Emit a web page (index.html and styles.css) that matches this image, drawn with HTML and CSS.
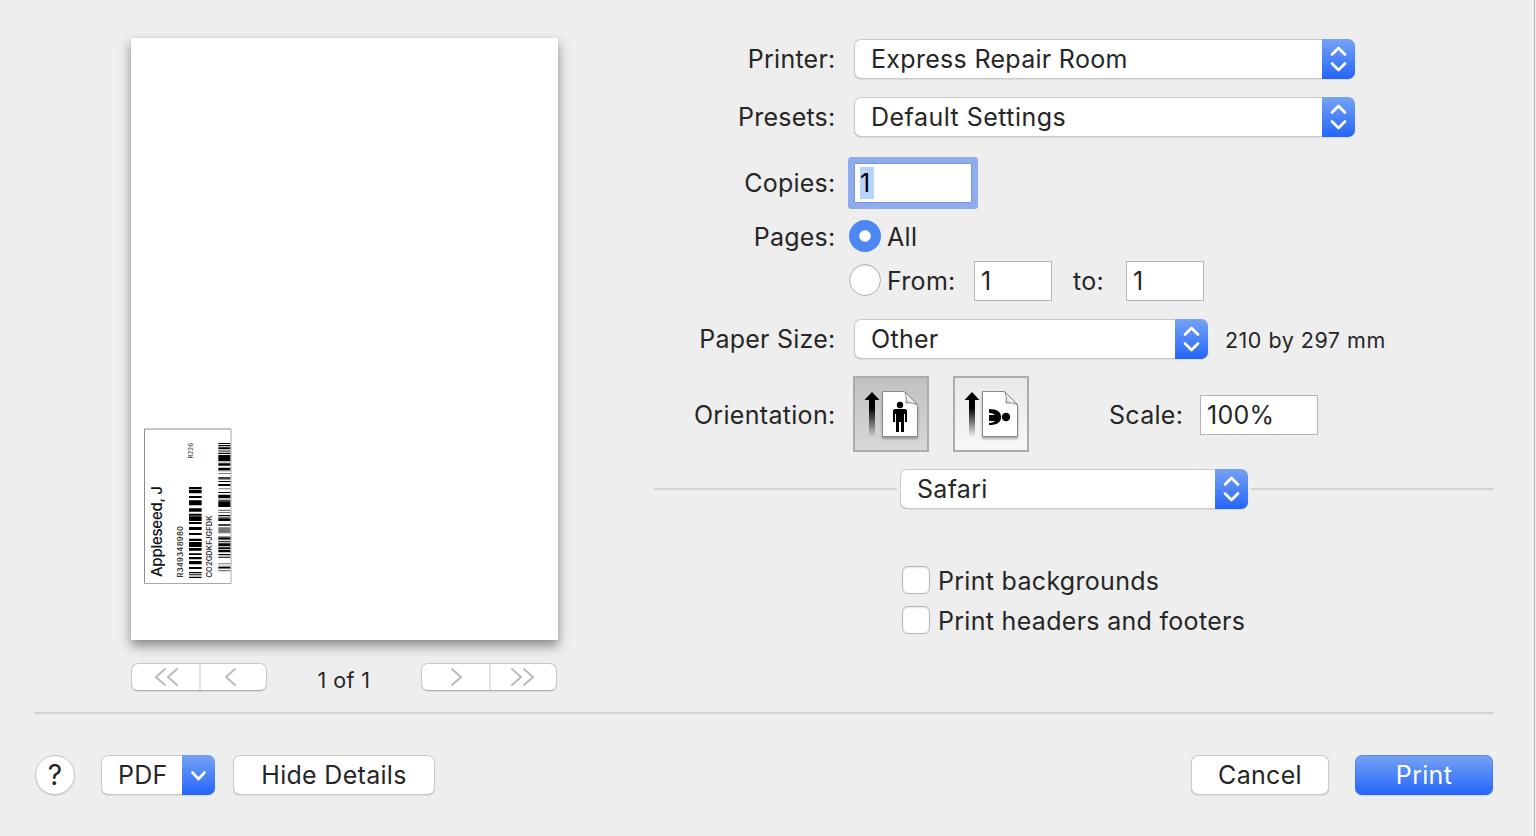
FILE: index.html
```html
<!DOCTYPE html>
<html lang="en">
<head>
<meta charset="utf-8">
<title>Print</title>
<link rel="stylesheet" href="styles.css">
</head>
<body>
<div class="dialog">
  <main class="content">
    <section class="preview">
      <div class="page">
        <svg class="label-art" width="90" height="158" viewBox="143 427 90 158">
          <path d="M144.500 583.500v-154.500h86.500" fill="none" stroke="#8c8c8c"/>
          <path d="M144.500 583.500H231V429" fill="none" stroke="#a8a8a8"/>
          <g fill="#111">
            <text transform="translate(162 577) rotate(-90)" font-size="15" font-weight="500" textLength="91">Appleseed, J</text>
            <text transform="translate(183 577.500) rotate(-90)" font-size="7.500" font-weight="600" textLength="51.500" fill="#333">R349348980</text>
            <text transform="translate(212.200 577.500) rotate(-90)" font-size="7.500" font-weight="600" textLength="62" fill="#333">CO2GDKFJGFDK</text>
            <text transform="translate(192.500 458.500) rotate(-90)" font-size="6" font-weight="500" textLength="15.500" fill="#444">R226</text>
          </g>
          <g fill="none" stroke="#000" transform="translate(130 420) scale(.33333)">
            <path stroke-width="38" d="M196 201v6m0 2v11m0 8v6m0 7v15m0 9v10m0 6v6m0 2v14m0 3v6m0 9v9m0 9v6m0 11v7m0 3v15m0 3v8m0 8v5m0 6v7m0 5v10m0 8v6m0 9v4m0 3v3m0 4v4"/>
            <path stroke-width="36" d="M283 69v3m0 3v4m0 3v6m0 10v4m0 3v18m0 2v2m0 3v7m0 6v8m0 21v4m0 7v3m0 6v6m0 18v3m0 5v11m0 4v3m0 2v17m0 24v4m0 6v8m0 10v4m0 35v7m0 5v3m0 3v9m0 3v5m0 2v8m0 5v4m0 4v3m0 28v4"/>
            <path stroke="#777" stroke-width="36" d="M283 91v5m0 55v3m0 5v3m0 15v2m0 26v3m0 61v4m0 3v3m0 12v3m0 28v18m0 9v3m0 6v3m0 69v3m0 4v3m0 4v3m0 3v4"/>
          </g>
        </svg>
      </div>
      <div class="pager">
        <div class="segmented">
          <span class="segment"><svg width="26" height="20" viewBox="0 0 26 20"><path d="M12 2 3 10l9 8M24 2l-9 8 9 8"/></svg></span>
          <span class="segment back"><svg width="14" height="20" viewBox="0 0 14 20"><path d="M11 2 2 10l9 8"/></svg></span>
        </div>
        <span class="page-count">1 of 1</span>
        <div class="segmented">
          <span class="segment"><svg width="14" height="20" viewBox="0 0 14 20"><path d="m3 2 9 8-9 8"/></svg></span>
          <span class="segment last"><svg width="26" height="20" viewBox="0 0 26 20"><path d="m2 2 9 8-9 8M14 2l9 8-9 8"/></svg></span>
        </div>
      </div>
    </section>
    <section class="settings">
      <div class="row printer"><span class="label">Printer:</span>
        <div class="popup wide"><span class="value">Express Repair Room</span><span class="stepper"><svg width="33" height="40" viewBox="0 0 33 40"><path d="m10 15.500 6.500-6.500 6.500 6.500M10 24.500l6.500 6.500 6.500-6.500"/></svg></span></div></div>
      <div class="row presets"><span class="label">Presets:</span>
        <div class="popup wide"><span class="value preset-name">Default Settings</span><span class="stepper"><svg width="33" height="40" viewBox="0 0 33 40"><path d="m10 15.500 6.500-6.500 6.500 6.500M10 24.500l6.500 6.500 6.500-6.500"/></svg></span></div></div>
      <div class="row copies"><span class="label">Copies:</span>
        <div class="field focused"><span class="selection">1</span></div></div>
      <div class="row pages-all"><span class="label">Pages:</span>
        <span class="radio checked"></span><span class="radio-text">All</span></div>
      <div class="row pages-from"><span class="label"></span>
        <span class="radio lifted"></span><span class="radio-text from">From:</span>
        <div class="field number">1</div><span class="to">to:</span><div class="field number">1</div></div>
      <div class="row paper"><span class="label">Paper Size:</span>
        <div class="popup medium"><span class="value">Other</span><span class="stepper"><svg width="33" height="40" viewBox="0 0 33 40"><path d="m10 15.500 6.500-6.500 6.500 6.500M10 24.500l6.500 6.500 6.500-6.500"/></svg></span></div>
        <span class="dimensions">210 by 297 mm</span></div>
      <div class="row orientation"><span class="label">Orientation:</span>
        <div class="orient selected">
          <svg width="72" height="72" viewBox="2 2 72 72">
            <defs>
              <linearGradient id="fade" x1="0" y1="0" x2="0" y2="1"><stop offset=".35" stop-color="#000"/><stop offset="1" stop-color="#000" stop-opacity="0"/></linearGradient>
              <linearGradient id="curl" x1="0" y1="1" x2="1" y2="0"><stop offset="0" stop-color="#aaa"/><stop offset=".45" stop-color="#fff"/></linearGradient>
            </defs>
            <path class="sheet" d="M29.500 15.500h22l13 13v32h-35z"/>
            <path d="M52 16q2 5 1 11 6-1 11 1.500z" fill="url(#curl)" stroke="#888"/>
            <path d="M11.500 24 19 16l7.500 8H22v37h-6V24z" fill="url(#fade)"/>
            <circle cx="47" cy="29" r="3.200"/>
            <path d="M42 33h10q2 0 2 2v11h-2v-8h-1v18h-3V46h-2v10h-3V38h-1v8h-2V35q0-2 2-2z"/>
          </svg></div>
        <div class="orient">
          <svg width="72" height="72" viewBox="2 2 72 72">
            <path class="sheet" d="M29.500 15.500h22l13 13v32h-35z"/>
            <path d="M52 16q2 5 1 11 6-1 11 1.500z" fill="url(#curl)" stroke="#888"/>
            <path d="M11.500 24 19 16l7.500 8H22v37h-6V24z" fill="url(#fade)"/>
            <circle cx="53" cy="41" r="4.200"/>
            <path d="M36 33q12 0 12 8t-12 8v-2q4 0 6-1.700l-1-.3h-5v-6h5l1-.3q-2-1.700-6-1.700z"/>
          </svg></div>
        <span class="scale-label">Scale:</span><div class="field scale">100%</div></div>
      <div class="divider-row"><i class="line before"></i>
        <div class="popup app"><span class="value">Safari</span><span class="stepper"><svg width="33" height="40" viewBox="0 0 33 40"><path d="m10 15.500 6.500-6.500 6.500 6.500M10 24.500l6.500 6.500 6.500-6.500"/></svg></span></div><i class="line after"></i></div>
      <div class="options">
        <div class="option"><span class="checkbox"></span><span class="option-text">Print backgrounds</span></div>
        <div class="option"><span class="checkbox"></span><span class="option-text">Print headers and footers</span></div>
      </div>
    </section>
  </main>
  <footer class="actions">
    <span class="help">?</span>
    <div class="popup pdf"><span class="value">PDF</span><span class="stepper"><svg width="33" height="40" viewBox="0 0 33 40"><path d="m10.500 17.500 6 6.500 6-6.500"/></svg></span></div>
    <span class="button details">Hide Details</span>
    <span class="button cancel">Cancel</span>
    <span class="button primary">Print</span>
  </footer>
</div>
</body>
</html>
```
FILE: styles.css
```css
* { box-sizing: border-box; }
body { margin: 0; background: #eee; color: #262626; font: 25px/40px Inter, "Liberation Sans", sans-serif; letter-spacing: .3px; white-space: nowrap; }
svg { display: block; flex: none; }
.dialog { width: 1535px; height: 836px; border-right: 1px solid #b5b5b5; overflow: hidden; }
.content { display: flex; height: 712px; padding: 38px 40px 0 131px; }
.preview { width: 427px; margin-right: 96px; flex: none; }
.page { height: 602px; background: #fff; padding: 389px 0 0 12px; box-shadow: 0 6px 11px rgba(0,0,0,.42), 0 0 2px rgba(0,0,0,.08); }
.label-art { letter-spacing: 0; }
.pager { display: flex; justify-content: space-between; width: 426px; margin-top: 23px; height: 28px; }
.segmented { display: flex; width: 136px; height: 28px; border: 1px solid #c8c8c8; border-bottom-color: #b0b0b0; border-radius: 7px; background: #fff; box-shadow: 0 1px 1px rgba(0,0,0,.08); }
.segment { width: 67px; flex: none; display: flex; align-items: center; justify-content: center; padding-left: 1px; }
.segment + .segment { border-left: 2px solid #e2e2e2; }
.back { padding: 0 5px 0 0; }
.last { padding: 0 2px 0 0; }
.segment path { fill: none; stroke: #bcbcbc; stroke-width: 2; stroke-linecap: round; }
.page-count { font-size: 21.5px; line-height: 35px; letter-spacing: .4px; }
.settings { width: 840px; padding-top: 1px; flex: none; }
.row { display: flex; align-items: center; height: 40px; }
.label { width: 181.5px; margin-right: 18.500px; text-align: right; flex: none; letter-spacing: .24px; }
.presets { margin-top: 18px; }
.copies { margin-top: 26px; }
.pages-all { margin-top: 17px; height: 32px; }
.pages-all .label, .pages-all .radio-text { padding-top: 2px; }
.pages-from { margin-top: 9px; }
.paper { margin-top: 18px; }
.orientation { margin-top: 17px; height: 76px; }
.orientation .label { margin-right: 17.5px; padding-top: 2px; letter-spacing: .31px; }
.popup { display: flex; height: 40px; border-radius: 7px; background: #fff; overflow: hidden; box-shadow: inset 0 0 0 1px #c9c9c9, inset 0 -1px 0 #aaa, 0 1px 1px rgba(0,0,0,.08); }
.value { flex: 1; padding-left: 17px; }
.preset-name { letter-spacing: .47px; }
.stepper { width: 33px; background: linear-gradient(#76a3f4, #2465fa); }
.stepper path { fill: none; stroke: #fff; stroke-width: 2.7; stroke-linecap: round; stroke-linejoin: round; }
.wide { width: 501px; }
.medium { width: 354px; }
.field { height: 40px; background: #fff; border: 1px solid #b4b4b4; padding-left: 6px; line-height: 38px; }
.focused { width: 118px; border-color: #7795d8; padding: 3px 0 0 5px; box-shadow: 0 0 0 6px #8eabec; color: #000; border-radius: 1px; }
.selection { display: block; width: 14px; height: 32px; line-height: 32px; background: #b7d5fc; }
.radio { width: 32px; height: 32px; margin-left: -5px; border-radius: 50%; background: #fff; border: 1px solid #b2b2b2; box-shadow: inset 0 1px 2px rgba(0,0,0,.1); flex: none; }
.radio.checked { border: 0; background: radial-gradient(circle, #fff 5.2px, #4d87f5 6.2px); box-shadow: none; }
.lifted { margin-bottom: 2px; }
.radio-text { margin-left: 6px; }
.from { width: 87px; }
.number { width: 78px; }
.to { width: 74px; padding-left: 21px; }
.dimensions { margin-left: 17px; font-size: 21.5px; letter-spacing: .5px; padding-top: 1px; }
.orient { width: 76px; height: 76px; border: 2px solid #acacac; margin-right: 24px; background: linear-gradient(#e8e8e8, #f8f8f8); }
.orient.selected { background: linear-gradient(#c1c1c1, #d8d8d8); }
.sheet { fill: #fff; stroke: #888; filter: drop-shadow(0 2px 1px rgba(0,0,0,.3)); }
.scale-label { width: 91px; margin-left: 56px; padding-top: 2px; }
.scale { width: 118px; margin-top: 2px; }
.divider-row { display: flex; align-items: center; margin-top: 17px; }
.line { height: 2px; background: #d4d4d4; }
.before { width: 243px; margin-right: 3px; }
.after { flex: 1; margin-left: 3px; }
.app { width: 348px; }
.options { padding: 57px 0 0 248px; display: grid; gap: 12px; }
.option { display: flex; align-items: center; height: 28px; gap: 8px; }
.option-text { padding-top: 2px; }
.checkbox { width: 28px; height: 28px; border: 1px solid #b6b6b6; border-radius: 6px; background: #fff; box-shadow: inset 0 1px 2px rgba(0,0,0,.1); }
.actions { display: flex; margin: 0 40px 0 34px; padding: 41px 1px 0; border-top: 2px solid #d4d4d4; }
.help { width: 40px; height: 40px; border-radius: 50%; background: #fff; border: 1px solid #c4c4c4; text-align: center; line-height: 38px; font-size: 28px; box-shadow: 0 1px 1px rgba(0,0,0,.1); }
.pdf { width: 114px; margin: 0 18px 0 26px; }
.button { height: 40px; border-radius: 7px; background: #fff; text-align: center; box-shadow: inset 0 0 0 1px #c9c9c9, inset 0 -1px 0 #aaa, 0 1px 1px rgba(0,0,0,.08); }
.details { width: 202px; }
.cancel { width: 138px; margin-left: auto; }
.primary { width: 138px; margin-left: 26px; color: #fff; background: linear-gradient(#76a3f4, #2465fa); box-shadow: inset 0 0 0 1px rgba(40,100,230,.3), 0 1px 1px rgba(0,0,0,.1); }
```
